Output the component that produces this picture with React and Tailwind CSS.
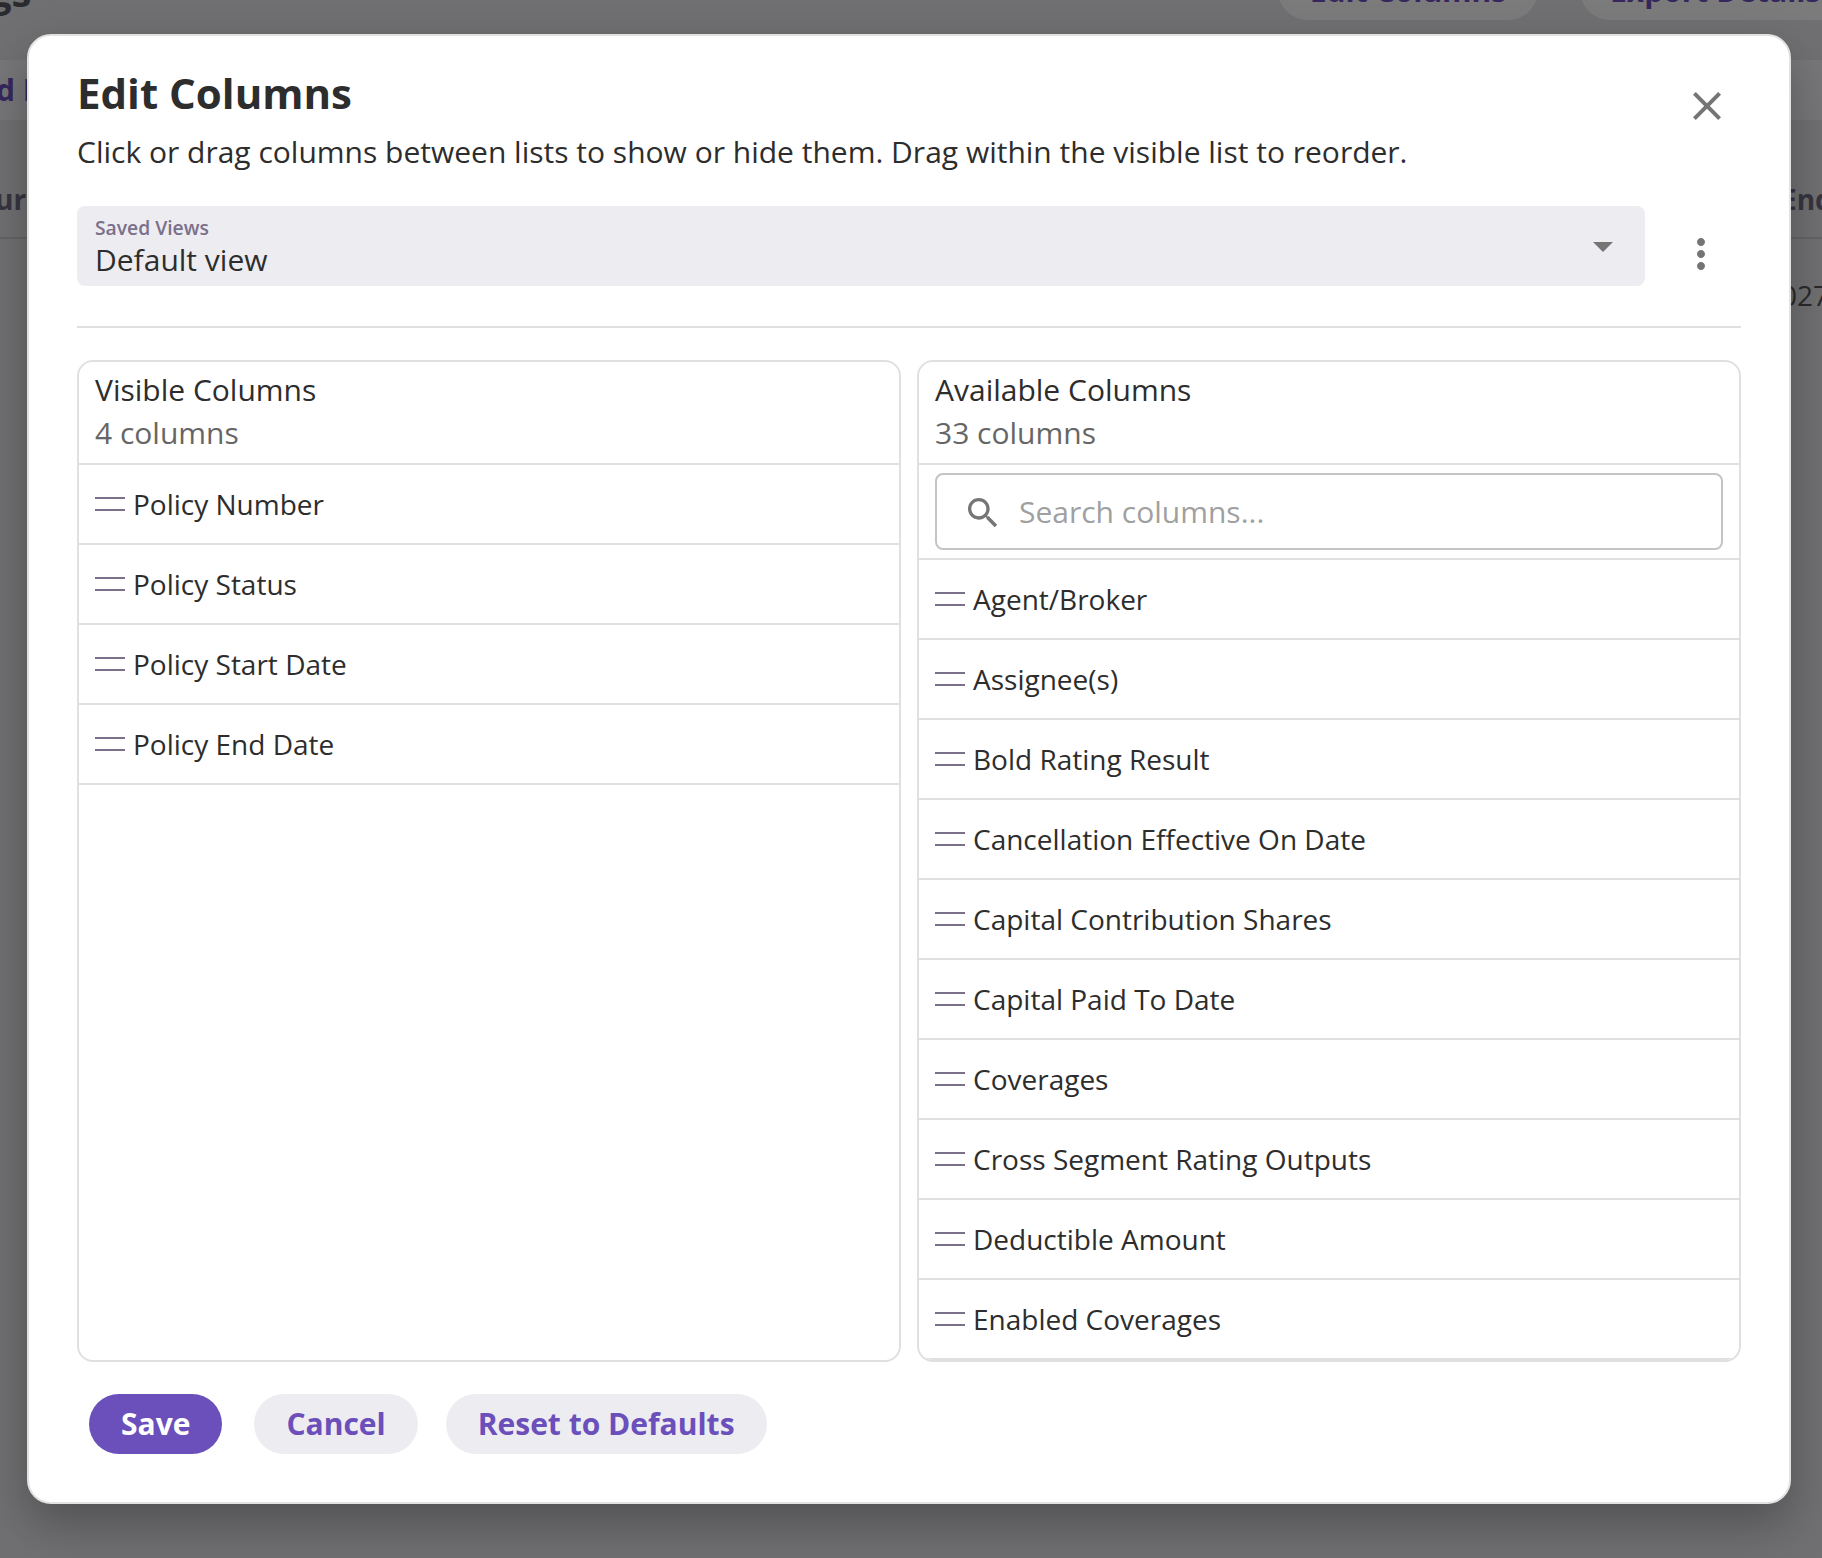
const visibleColumns = ["Policy Number", "Policy Status", "Policy Start Date", "Policy End Date"];

const availableColumns = [
  "Agent/Broker",
  "Assignee(s)",
  "Bold Rating Result",
  "Cancellation Effective On Date",
  "Capital Contribution Shares",
  "Capital Paid To Date",
  "Coverages",
  "Cross Segment Rating Outputs",
  "Deductible Amount",
  "Enabled Coverages",
];

function Icon({ d, size, className }) {
  return (
    <svg width={size} height={size} viewBox="0 0 24 24" fill="currentColor" className={className}>
      <path d={d} />
    </svg>
  );
}

function ColumnRow({ label }) {
  return (
    <div className="flex h-[80px] items-center border-b-2 border-[#e0e0e0] pl-[16px]">
      <div className="flex h-[14px] w-[30px] shrink-0 flex-col justify-between">
        <div className="h-[2px] bg-[#7a708a]" />
        <div className="h-[2px] bg-[#7a708a]" />
      </div>
      <span className="ml-[8px] text-[28px] leading-[40px] text-[#2d2d2d]">{label}</span>
    </div>
  );
}

function Panel({ title, count, children }) {
  return (
    <div className="h-[1002px] overflow-hidden rounded-[16px] border-2 border-[#e0e0e0]">
      <div className="border-b-2 border-[#e0e0e0] pt-[6px] pb-[9px] pl-[16px] text-[30px] leading-[43px]">
        <div className="text-[#2d2d2d]">{title}</div>
        <div className="text-[#666666]">{count}</div>
      </div>
      {children}
    </div>
  );
}

function BackgroundPage() {
  return (
    <div className="h-full font-bold text-[#6b4fbb]">
      <div className="-mt-[40px] flex h-[60px] text-[30px]">
        <div className="w-[1278px] shrink-0 -indent-[11px] pt-[12px] text-[40px] leading-[40px] text-[#55555f]">gs</div>
        <div className="flex h-[60px] w-[260px] shrink-0 items-center justify-center rounded-full bg-[#f6f6f6]">Edit Columns</div>
        <div className="ml-[42px] flex h-[60px] shrink-0 items-center rounded-full bg-[#f6f6f6] pr-[32px] pl-[30px]">Export Details</div>
      </div>
      <div className="mt-[40px] h-[60px] bg-[#eeeef2] -indent-[4px] text-[30px] leading-[60px] whitespace-pre">d I</div>
      <div className="flex h-[119px] items-end border-b-2 border-[#c8c8cc] pb-[18px] text-[28px] leading-[40px] text-[#6c6a80]">
        <span className="w-[1781px] shrink-0 -indent-[5px]">ur</span>
        <span>End</span>
      </div>
      <div className="mt-[36px] pl-[1781px] text-[28px] leading-[40px] font-normal text-[#555555]">027</div>
    </div>
  );
}

export default function App() {
  return (
    <div className="relative h-[1558px] overflow-hidden bg-[#e0e0e4] font-['Open_Sans',sans-serif]">
      <BackgroundPage />
      <div className="absolute inset-0 bg-black/50 pt-[34px] pl-[27px]">
        <div className="w-[1764px] rounded-[24px] border-2 border-[#e2e2e2] bg-white px-[48px] pt-[29px] pb-[48px] shadow-[0_20px_48px_rgba(0,0,0,0.28)]">
          <div className="flex items-start justify-between">
            <div>
              <div className="text-[42px] leading-[56px] font-bold text-[#2d2d2d]">Edit Columns</div>
              <div className="mt-[9px] text-[30px] leading-[44px] text-[#2d2d2d]">
                Click or drag columns between lists to show or hide them. Drag within the visible list to reorder.
              </div>
            </div>
            <Icon
              size={48}
              className="mt-[17px] mr-[10px] text-[#757575]"
              d="M19 6.41 17.59 5 12 10.59 6.41 5 5 6.41 10.59 12 5 17.59 6.41 19 12 13.41 17.59 19 19 17.59 13.41 12z"
            />
          </div>

          <div className="mt-[32px] flex items-start">
            <div className="flex h-[80px] w-[1568px] items-center justify-between rounded-[8px] bg-[#edecf1] pr-[18px] pl-[18px]">
              <div className="pt-[4px]">
                <div className="text-[19.3px] leading-[22px] font-semibold text-[#7a708a]">Saved Views</div>
                <div className="mt-[2px] text-[30px] leading-[38px] text-[#2d2d2d]">Default view</div>
              </div>
              <Icon size={48} className="text-[#757575]" d="m7 10 5 5 5-5z" />
            </div>
            <Icon
              size={48}
              className="mt-[24px] ml-[32px] text-[#757575]"
              d="M12 8c1.1 0 2-.9 2-2s-.9-2-2-2-2 .9-2 2 .9 2 2 2zm0 2c-1.1 0-2 .9-2 2s.9 2 2 2 2-.9 2-2-.9-2-2-2zm0 6c-1.1 0-2 .9-2 2s.9 2 2 2 2-.9 2-2-.9-2-2-2z"
            />
          </div>

          <div className="mt-[40px] h-[2px] bg-[#e0e0e0]" />

          <div className="mt-[32px] grid grid-cols-2 gap-[16px]">
            <Panel title="Visible Columns" count="4 columns">
              {visibleColumns.map((c) => (
                <ColumnRow key={c} label={c} />
              ))}
            </Panel>
            <Panel title="Available Columns" count="33 columns">
              <div className="border-b-2 border-[#e0e0e0] px-[16px] py-[8px]">
                <div className="flex h-[77px] items-center rounded-[8px] border-2 border-[#c4c4c4] pl-[26px]">
                  <Icon
                    size={40}
                    className="mt-[3px] text-[#757575]"
                    d="M15.5 14h-.79l-.28-.27C15.41 12.59 16 11.11 16 9.5 16 5.91 13.09 3 9.5 3S3 5.91 3 9.5 5.91 16 9.5 16c1.61 0 3.09-.59 4.23-1.57l.27.28v.79l5 4.99L20.49 19l-4.99-5zm-6 0C7.01 14 5 11.99 5 9.5S7.01 5 9.5 5 14 7.01 14 9.5 11.99 14 9.5 14z"
                  />
                  <span className="ml-[16px] text-[30px] text-[#a0a0a0]">Search columns...</span>
                </div>
              </div>
              {availableColumns.map((c) => (
                <ColumnRow key={c} label={c} />
              ))}
            </Panel>
          </div>

          <div className="mt-[32px] ml-[12px] flex h-[60px] text-[30px] font-bold">
            <button className="rounded-full bg-[#6b4fbb] px-[32px] pb-[2px] text-white">Save</button>
            <button className="ml-[32px] rounded-full bg-[#edecf1] px-[32px] pb-[2px] text-[#6b4fbb]">Cancel</button>
            <button className="ml-[28px] rounded-full bg-[#edecf1] px-[32px] pb-[2px] text-[#6b4fbb]">Reset to Defaults</button>
          </div>
        </div>
      </div>
    </div>
  );
}
